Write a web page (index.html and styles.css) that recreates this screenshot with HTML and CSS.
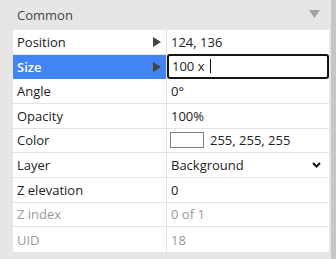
FILE: index.html
```html
<!DOCTYPE html>
<html>
<head>
<meta charset="utf-8">
<link rel="stylesheet" href="styles.css">
</head>
<body>
<div class="panel">
  <div class="main">
    <div class="section-header">
      <span class="section-title">Common</span>
      <svg class="collapse" width="11" height="8" viewBox="0 0 11 8"><path d="M0 0H11L5.5 8Z" fill="#a2a2a2"/></svg>
    </div>
    <div class="props">
      <div class="row">
        <div class="label">Position<svg class="expander" width="8" height="10" viewBox="0 0 8 10"><path d="M0 0L8 5L0 10Z" fill="#444"/></svg></div>
        <div class="value">124, 136</div>
      </div>
      <div class="row selected">
        <div class="label">Size<svg class="expander" width="8" height="10" viewBox="0 0 8 10"><path d="M0 0L8 5L0 10Z" fill="#444"/></svg></div>
        <div class="value editing"><span>100 x&nbsp;</span><span class="caret"></span></div>
      </div>
      <div class="row">
        <div class="label">Angle</div>
        <div class="value">0°</div>
      </div>
      <div class="row">
        <div class="label">Opacity</div>
        <div class="value">100%</div>
      </div>
      <div class="row">
        <div class="label">Color</div>
        <div class="value"><span class="swatch"></span>255, 255, 255</div>
      </div>
      <div class="row">
        <div class="label">Layer</div>
        <div class="value select"><span>Background</span><svg class="chev" width="9" height="6" viewBox="0 0 9 6"><path d="M1 1L4.5 4.5L8 1" fill="none" stroke="#111" stroke-width="2"/></svg></div>
      </div>
      <div class="row">
        <div class="label">Z elevation</div>
        <div class="value">0</div>
      </div>
      <div class="row disabled">
        <div class="label">Z index</div>
        <div class="value">0 of 1</div>
      </div>
      <div class="row disabled last">
        <div class="label">UID</div>
        <div class="value">18</div>
      </div>
    </div>
  </div>
  <div class="scrollbar"></div>
</div>
</body>
</html>
```

FILE: styles.css
```css
html, body {
  margin: 0;
  padding: 0;
}
body {
  font-family: "Open Sans", "Noto Sans", sans-serif;
  font-size: 13px;
  color: #222;
}
.panel {
  width: 336px;
  height: 259px;
  display: flex;
  background: #e6e6e6;
  overflow: hidden;
}
.main {
  width: 331px;
  display: flex;
  flex-direction: column;
}
.scrollbar {
  width: 5px;
  background: #c6c6c6;
}
.section-header {
  height: 30px;
  display: flex;
  align-items: center;
  justify-content: space-between;
  padding: 0 11px 0 17px;
  color: #444;
}
.collapse {
  margin-top: -3px;
}
.props {
  margin-left: 13px;
  width: 316px;
  background: #fff;
}
.row {
  display: grid;
  grid-template-columns: 154px 162px;
  height: 24.67px;
  box-sizing: border-box;
  border-bottom: 1px solid #e2e2e2;
}
.row.last {
  border-bottom: none;
}
.label {
  display: flex;
  align-items: center;
  justify-content: space-between;
  padding: 0 5px 0 4px;
  border-right: 1px solid #e2e2e2;
  color: #222;
}
.value {
  display: flex;
  align-items: center;
  padding-left: 4px;
  color: #222;
}
.selected .label {
  background: #4284f3;
  color: #fff;
  font-weight: 600;
}
.value.editing {
  box-sizing: border-box;
  border: 2px solid #151515;
  border-radius: 3px;
  padding-left: 3px;
  margin-top: -1px;
  height: 25px;
  background: #fff;
}
.caret {
  display: inline-block;
  width: 1px;
  height: 14px;
  background: #111;
  margin-left: 2px;
}
.swatch {
  display: inline-block;
  width: 32px;
  height: 14px;
  border: 1px solid #808080;
  background: #fff;
  margin-left: -1px;
  margin-right: 6px;
}
.value.select {
  justify-content: space-between;
  padding-right: 8px;
}
.disabled .label,
.disabled .value {
  color: #999;
}
```
